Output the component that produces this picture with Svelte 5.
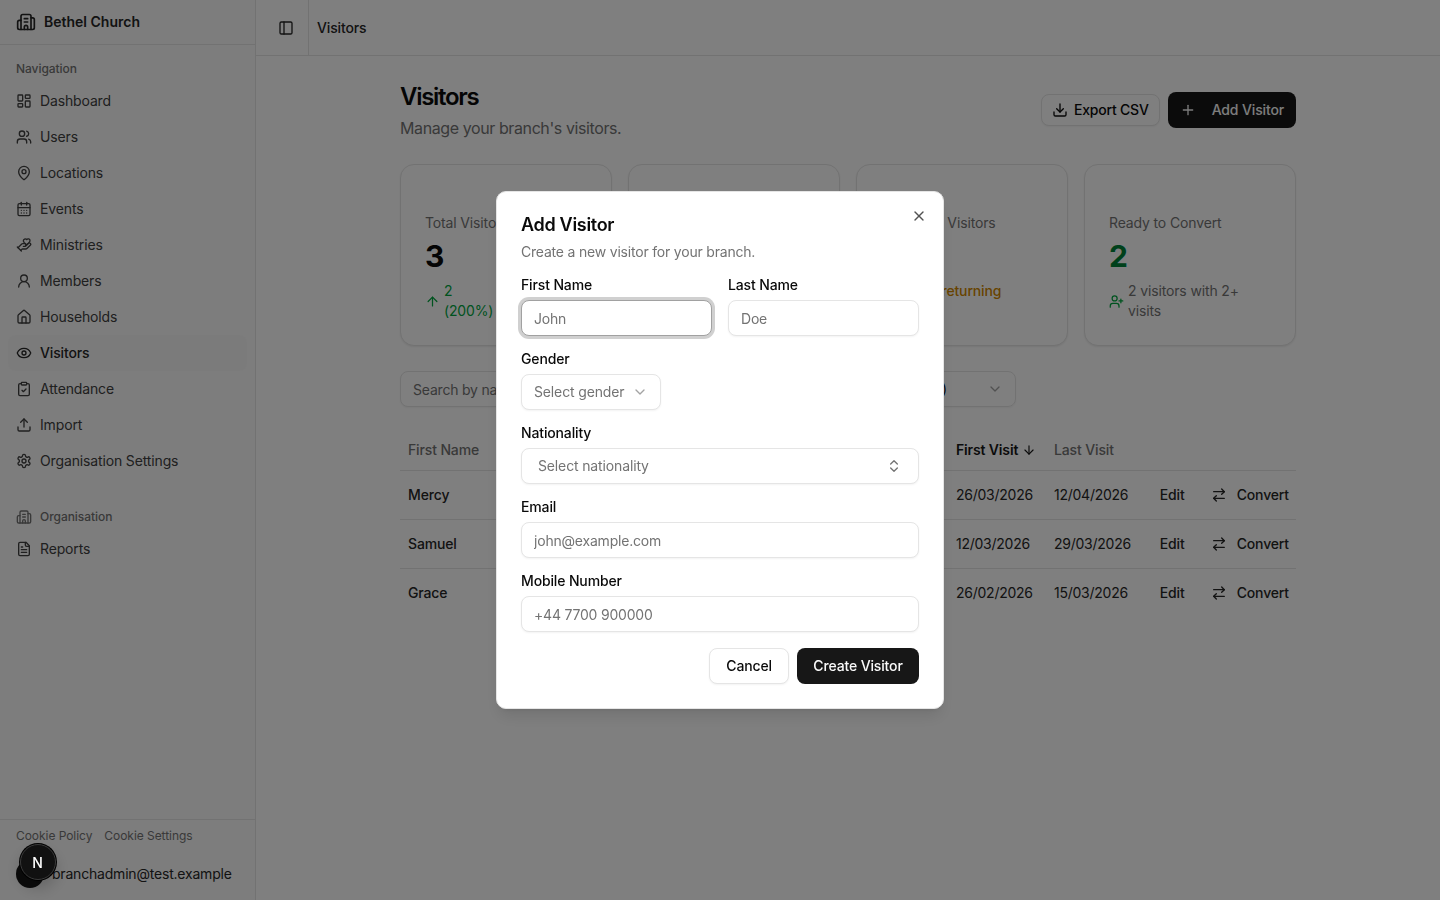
<script lang="ts">
  // lucide icon bodies, keyed by name
  const icons: Record<string, string> = {
    building: '<path d="M10 12h4"/><path d="M10 8h4"/><path d="M14 21v-3a2 2 0 0 0-4 0v3"/><path d="M6 10H4a2 2 0 0 0-2 2v7a2 2 0 0 0 2 2h16a2 2 0 0 0 2-2V9a2 2 0 0 0-2-2h-2"/><path d="M6 21V5a2 2 0 0 1 2-2h8a2 2 0 0 1 2 2v16"/>',
    dashboard: '<rect width="7" height="9" x="3" y="3" rx="1"/><rect width="7" height="5" x="14" y="3" rx="1"/><rect width="7" height="9" x="14" y="12" rx="1"/><rect width="7" height="5" x="3" y="16" rx="1"/>',
    users: '<path d="M16 21v-2a4 4 0 0 0-4-4H6a4 4 0 0 0-4 4v2"/><circle cx="9" cy="7" r="4"/><path d="M22 21v-2a4 4 0 0 0-3-3.87"/><path d="M16 3.13a4 4 0 0 1 0 7.75"/>',
    pin: '<path d="M20 10c0 4.993-5.539 10.193-7.399 11.799a1 1 0 0 1-1.202 0C9.539 20.193 4 14.993 4 10a8 8 0 0 1 16 0"/><circle cx="12" cy="10" r="3"/>',
    calendar: '<path d="M8 2v4"/><path d="M16 2v4"/><rect width="18" height="18" x="3" y="4" rx="2"/><path d="M3 10h18"/><path d="M8 14h.01"/><path d="M12 14h.01"/><path d="M16 14h.01"/><path d="M8 18h.01"/><path d="M12 18h.01"/><path d="M16 18h.01"/>',
    hand: '<path d="M11 14h2a2 2 0 1 0 0-4h-3c-.6 0-1.1.2-1.4.6L3 16"/><path d="m7 20 1.6-1.4c.3-.4.8-.6 1.4-.6h4c1.1 0 2.1-.4 2.8-1.2l4.6-4.4a2 2 0 0 0-2.75-2.91l-4.2 3.9"/><path d="m2 15 6 6"/><path d="M19.5 8.5c.7-.7 1.5-1.6 1.5-2.7A2.73 2.73 0 0 0 16 4a2.78 2.78 0 0 0-5 1.8c0 1.2.8 2 1.5 2.8L16 12Z"/>',
    user: '<circle cx="12" cy="8" r="5"/><path d="M20 21a8 8 0 0 0-16 0"/>',
    home: '<path d="M15 21v-8a1 1 0 0 0-1-1h-4a1 1 0 0 0-1 1v8"/><path d="M3 10a2 2 0 0 1 .709-1.528l7-5.999a2 2 0 0 1 2.582 0l7 5.999A2 2 0 0 1 21 10v9a2 2 0 0 1-2 2H5a2 2 0 0 1-2-2z"/>',
    eye: '<path d="M2.062 12.348a1 1 0 0 1 0-.696 10.75 10.75 0 0 1 19.876 0 1 1 0 0 1 0 .696 10.75 10.75 0 0 1-19.876 0"/><circle cx="12" cy="12" r="3"/>',
    clipboard: '<rect width="8" height="4" x="8" y="2" rx="1"/><path d="M16 4h2a2 2 0 0 1 2 2v14a2 2 0 0 1-2 2H6a2 2 0 0 1-2-2V6a2 2 0 0 1 2-2h2"/><path d="m9 14 2 2 4-4"/>',
    upload: '<path d="M21 15v4a2 2 0 0 1-2 2H5a2 2 0 0 1-2-2v-4"/><path d="m17 8-5-5-5 5"/><path d="M12 3v12"/>',
    settings: '<path d="M12.22 2h-.44a2 2 0 0 0-2 2v.18a2 2 0 0 1-1 1.73l-.43.25a2 2 0 0 1-2 0l-.15-.08a2 2 0 0 0-2.73.73l-.22.38a2 2 0 0 0 .73 2.73l.15.1a2 2 0 0 1 1 1.72v.51a2 2 0 0 1-1 1.74l-.15.09a2 2 0 0 0-.73 2.73l.22.38a2 2 0 0 0 2.73.73l.15-.08a2 2 0 0 1 2 0l.43.25a2 2 0 0 1 1 1.73V20a2 2 0 0 0 2 2h.44a2 2 0 0 0 2-2v-.18a2 2 0 0 1 1-1.73l.43-.25a2 2 0 0 1 2 0l.15.08a2 2 0 0 0 2.73-.73l.22-.39a2 2 0 0 0-.73-2.73l-.15-.08a2 2 0 0 1-1-1.74v-.5a2 2 0 0 1 1-1.74l.15-.09a2 2 0 0 0 .73-2.73l-.22-.38a2 2 0 0 0-2.73-.73l-.15.08a2 2 0 0 1-2 0l-.43-.25a2 2 0 0 1-1-1.73V4a2 2 0 0 0-2-2z"/><circle cx="12" cy="12" r="3"/>',
    file: '<path d="M15 2H6a2 2 0 0 0-2 2v16a2 2 0 0 0 2 2h12a2 2 0 0 0 2-2V7Z"/><path d="M14 2v4a2 2 0 0 0 2 2h4"/><path d="M10 9H8"/><path d="M16 13H8"/><path d="M16 17H8"/>',
    panel: '<rect width="18" height="18" x="3" y="3" rx="2"/><path d="M9 3v18"/>',
    download: '<path d="M21 15v4a2 2 0 0 1-2 2H5a2 2 0 0 1-2-2v-4"/><path d="m7 10 5 5 5-5"/><path d="M12 15V3"/>',
    plus: '<path d="M5 12h14"/><path d="M12 5v14"/>',
    x: '<path d="M18 6 6 18"/><path d="m6 6 12 12"/>',
    chevron: '<path d="m6 9 6 6 6-6"/>',
    updown: '<path d="m7 15 5 5 5-5"/><path d="m7 9 5-5 5 5"/>',
    arrowUp: '<path d="m5 12 7-7 7 7"/><path d="M12 19V5"/>',
    arrowDown: '<path d="M12 5v14"/><path d="m19 12-7 7-7-7"/>',
    userPlus: '<path d="M16 21v-2a4 4 0 0 0-4-4H6a4 4 0 0 0-4 4v2"/><circle cx="9" cy="7" r="4"/><path d="M19 8v6"/><path d="M22 11h-6"/>',
    swap: '<path d="m16 3 4 4-4 4"/><path d="M20 7H4"/><path d="m8 21-4-4 4-4"/><path d="M4 17h16"/>'
  };

  const navItems = [
    { label: 'Dashboard', icon: 'dashboard' },
    { label: 'Users', icon: 'users' },
    { label: 'Locations', icon: 'pin' },
    { label: 'Events', icon: 'calendar' },
    { label: 'Ministries', icon: 'hand' },
    { label: 'Members', icon: 'user' },
    { label: 'Households', icon: 'home' },
    { label: 'Visitors', icon: 'eye', active: true },
    { label: 'Attendance', icon: 'clipboard' },
    { label: 'Import', icon: 'upload' },
    { label: 'Organisation Settings', icon: 'settings' }
  ];

  const visitors = [
    { first: 'Mercy', firstVisit: '26/03/2026', lastVisit: '12/04/2026' },
    { first: 'Samuel', firstVisit: '12/03/2026', lastVisit: '29/03/2026' },
    { first: 'Grace', firstVisit: '26/02/2026', lastVisit: '15/03/2026' }
  ];
</script>

{#snippet icon(name, size = 16)}
  <svg width={size} height={size} viewBox="0 0 24 24" fill="none" stroke="currentColor" stroke-width="2" stroke-linecap="round" stroke-linejoin="round" aria-hidden="true">{@html icons[name]}</svg>
{/snippet}

<div class="shell">
  <aside class="sidebar">
    <div class="brand">
      {@render icon('building', 20)}
      <span>Bethel Church</span>
    </div>

    <nav class="nav">
      <div class="group-label">Navigation</div>
      {#each navItems as item}
        <a class="nav-item" class:active={item.active} href="#top">
          {@render icon(item.icon)}
          <span>{item.label}</span>
        </a>
      {/each}

      <div class="group-label org">
        {@render icon('building')}
        <span>Organisation</span>
      </div>
      <a class="nav-item" href="#top">
        {@render icon('file')}
        <span>Reports</span>
      </a>
    </nav>

    <div class="side-footer">
      <div class="cookie-links">
        <span>Cookie Policy</span>
        <span>Cookie Settings</span>
      </div>
      <div class="account">
        <span class="avatar"></span>
        <span>branchadmin@test.example</span>
      </div>
    </div>
  </aside>

  <div class="main">
    <header class="topbar">
      <button class="trigger" aria-label="Toggle sidebar">{@render icon('panel')}</button>
      <div class="topbar-title">Visitors</div>
    </header>

    <main class="content">
      <div class="page-head">
        <div>
          <h1>Visitors</h1>
          <p>Manage your branch's visitors.</p>
        </div>
        <div class="page-actions">
          <button class="btn outline small">{@render icon('download')} Export CSV</button>
          <button class="btn dark add">{@render icon('plus')} Add Visitor</button>
        </div>
      </div>

      <div class="stats">
        <div class="stat">
          <div class="stat-title">Total Visitors</div>
          <div class="stat-value">3</div>
          <div class="stat-foot green">
            {@render icon('arrowUp', 15)}
            <span>2<br />(200%)</span>
          </div>
        </div>
        <div class="stat"></div>
        <div class="stat">
          <div class="stat-title">Returning Visitors</div>
          <div class="stat-value">2</div>
          <div class="stat-foot amber">
            {@render icon('users', 15)}
            <span>2 of 3 returning</span>
          </div>
        </div>
        <div class="stat">
          <div class="stat-title">Ready to Convert</div>
          <div class="stat-value green">2</div>
          <div class="stat-foot">
            <span class="green foot-icon">{@render icon('userPlus', 15)}</span>
            <span>2 visitors with 2+ visits</span>
          </div>
        </div>
      </div>

      <div class="filters">
        <input class="search" placeholder="Search by name..." />
        <div class="filter-select">
          <span>First Visit (newest)</span>
          {@render icon('chevron')}
        </div>
      </div>

      <table class="table">
        <colgroup>
          <col style="width: 548px" />
          <col style="width: 98px" />
          <col style="width: 105px" />
          <col />
        </colgroup>
        <thead>
          <tr>
            <th>First Name</th>
            <th class="sorted">
              <span class="sort">First Visit {@render icon('arrowDown', 14)}</span>
            </th>
            <th>Last Visit</th>
            <th></th>
          </tr>
        </thead>
        <tbody>
          {#each visitors as v}
            <tr>
              <td class="name">{v.first}</td>
              <td class="date">{v.firstVisit}</td>
              <td class="date">{v.lastVisit}</td>
              <td>
                <div class="row-actions">
                  <span>Edit</span>
                  <span class="convert">{@render icon('swap')} Convert</span>
                </div>
              </td>
            </tr>
          {/each}
        </tbody>
      </table>
    </main>
  </div>
</div>

<div class="overlay"></div>

<div class="modal" role="dialog" aria-labelledby="dialog-title">
  <button class="close" aria-label="Close">{@render icon('x')}</button>
  <h2 id="dialog-title">Add Visitor</h2>
  <p class="modal-desc">Create a new visitor for your branch.</p>

  <div class="form">
    <div class="two">
      <div class="field">
        <label for="first">First Name</label>
        <input id="first" class="input focused" placeholder="John" />
      </div>
      <div class="field">
        <label for="last">Last Name</label>
        <input id="last" class="input" placeholder="Doe" />
      </div>
    </div>

    <div class="field">
      <span class="label">Gender</span>
      <div class="input select gender">
        <span>Select gender</span>
        {@render icon('chevron')}
      </div>
    </div>

    <div class="field">
      <span class="label">Nationality</span>
      <div class="input select nationality">
        <span>Select nationality</span>
        {@render icon('updown')}
      </div>
    </div>

    <div class="field">
      <label for="email">Email</label>
      <input id="email" class="input" placeholder="john@example.com" />
    </div>

    <div class="field">
      <label for="mobile">Mobile Number</label>
      <input id="mobile" class="input" placeholder="+44 7700 900000" />
    </div>

    <div class="modal-actions">
      <button class="btn outline">Cancel</button>
      <button class="btn dark create">Create Visitor</button>
    </div>
  </div>
</div>

<button class="dev-badge" aria-label="Next dev tools">N</button>

<style>
  :global(body) {
    margin: 0;
    font-family: Inter, "Liberation Sans", sans-serif;
    font-size: 14px;
    line-height: 20px;
    letter-spacing: -0.14px;
    color: #0a0a0a;
    background: #fff;
  }

  * {
    box-sizing: border-box;
  }

  svg {
    display: block;
    flex: none;
  }

  button {
    font-family: inherit;
    letter-spacing: inherit;
    cursor: pointer;
  }

  .shell {
    display: flex;
    height: 100vh;
    overflow: hidden;
  }

  /* Sidebar */
  .sidebar {
    width: 256px;
    flex: none;
    display: flex;
    flex-direction: column;
    background: #fafafa;
    border-right: 1px solid #e5e5e5;
  }

  .brand {
    height: 45px;
    flex: none;
    display: flex;
    align-items: center;
    gap: 8px;
    padding: 0 16px 1px;
    font-weight: 600;
    letter-spacing: 0;
    color: #262626;
    border-bottom: 1px solid #e5e5e5;
  }

  .nav {
    flex: 1;
    padding: 10px 8px 0;
  }

  .group-label {
    height: 28px;
    padding: 0 8px;
    display: flex;
    align-items: center;
    gap: 8px;
    font-size: 12px;
    font-weight: 500;
    letter-spacing: -0.05px;
    color: #737373;
  }

  .group-label.org {
    margin-top: 24px;
  }

  .nav-item {
    height: 36px;
    display: flex;
    align-items: center;
    gap: 8px;
    padding: 0 8px;
    border-radius: 8px;
    color: #404040;
    text-decoration: none;
  }

  .nav-item.active {
    background: #f7f7f7;
    color: #262626;
    font-weight: 500;
  }

  .side-footer {
    flex: none;
    border-top: 1px solid #e5e5e5;
    padding: 8px 16px;
  }

  .cookie-links {
    display: flex;
    gap: 12px;
    font-size: 12px;
    line-height: 16px;
    letter-spacing: -0.05px;
    color: #737373;
    margin-bottom: 12px;
  }

  .account {
    height: 36px;
    display: flex;
    align-items: center;
    gap: 8px;
    letter-spacing: -0.2px;
    color: #262626;
  }

  .avatar {
    width: 28px;
    height: 28px;
    border-radius: 50%;
    background: #171717;
    flex: none;
  }

  /* Main */
  .main {
    flex: 1;
    min-width: 0;
  }

  .topbar {
    height: 56px;
    display: flex;
    align-items: stretch;
    padding-left: 16px;
    border-bottom: 1px solid #e5e5e5;
  }

  .trigger {
    width: 28px;
    height: 28px;
    align-self: center;
    display: flex;
    align-items: center;
    justify-content: center;
    padding: 0;
    border: 0;
    background: none;
    color: #262626;
    margin-right: 8px;
  }

  .topbar-title {
    display: flex;
    align-items: center;
    padding-left: 8px;
    border-left: 1px solid #e5e5e5;
    font-weight: 500;
    color: #262626;
  }

  .content {
    width: 896px;
    margin: 0 auto;
    padding-top: 24px;
  }

  .page-head {
    display: flex;
    align-items: center;
    justify-content: space-between;
  }

  h1 {
    margin: 1px 0 -1px;
    font-size: 24px;
    line-height: 32px;
    font-weight: 600;
    letter-spacing: -1.3px;
  }

  .page-head p {
    margin: 4px 0 0;
    font-size: 16px;
    line-height: 24px;
    letter-spacing: -0.4px;
    color: #737373;
  }

  .page-actions {
    display: flex;
    align-items: center;
    gap: 8px;
  }

  .btn {
    display: inline-flex;
    align-items: center;
    justify-content: center;
    height: 36px;
    border-radius: 8px;
    font-size: 14px;
    line-height: 20px;
    font-weight: 500;
    white-space: nowrap;
  }

  .btn.outline {
    background: #fff;
    color: #0a0a0a;
    border: 1px solid #e5e5e5;
    box-shadow: 0 1px 2px rgba(0, 0, 0, 0.05);
    padding: 0 16px;
  }

  .btn.outline.small {
    height: 32px;
    gap: 6px;
    padding: 0 10px;
    letter-spacing: -0.2px;
  }

  .btn.dark {
    background: #171717;
    color: #fafafa;
    border: 0;
  }

  .btn.add {
    gap: 16px;
    padding: 0 12px;
  }

  .stats {
    display: grid;
    grid-template-columns: repeat(4, 1fr);
    gap: 16px;
    margin-top: 24px;
  }

  .stat {
    height: 182px;
    padding: 48px 24px 24px;
    background: #fff;
    border: 1px solid #e5e5e5;
    border-radius: 14px;
    box-shadow: 0 1px 2px rgba(0, 0, 0, 0.08);
  }

  .stat-title {
    color: #737373;
  }

  .stat-value {
    margin-top: 5px;
    font-size: 30px;
    line-height: 36px;
    font-weight: 700;
  }

  .stat-foot {
    margin-top: 7px;
    display: flex;
    align-items: center;
    gap: 4px;
    color: #737373;
  }

  .foot-icon {
    flex: none;
  }

  .green {
    color: #00a63e;
  }

  .stat-value.green {
    color: #008236;
  }

  .amber {
    color: #d08700;
    font-weight: 500;
  }

  .filters {
    width: 616px;
    display: flex;
    gap: 12px;
    margin-top: 25px;
  }

  .search {
    flex: 1;
    min-width: 0;
    height: 36px;
    padding: 0 12px;
    font: inherit;
    letter-spacing: -0.2px;
    border: 1px solid #e5e5e5;
    border-radius: 8px;
    box-shadow: 0 1px 2px rgba(0, 0, 0, 0.05);
    outline: none;
  }

  .search::placeholder,
  .input::placeholder {
    color: #737373;
  }

  .filter-select {
    height: 36px;
    display: flex;
    align-items: center;
    gap: 40px;
    padding: 0 12px;
    border: 1px solid #e5e5e5;
    border-radius: 8px;
    box-shadow: 0 1px 2px rgba(0, 0, 0, 0.05);
  }

  .filter-select svg {
    color: #a3a3a3;
  }

  .table {
    width: 100%;
    margin-top: 23px;
    border-collapse: collapse;
    table-layout: fixed;
  }

  .table th {
    height: 40px;
    padding: 0 8px;
    text-align: left;
    font-weight: 500;
    color: #737373;
    border-bottom: 1px solid #e5e5e5;
  }

  .table th.sorted {
    color: #171717;
    font-weight: 600;
  }

  .sort {
    display: inline-flex;
    align-items: center;
    gap: 4px;
  }

  .table td {
    height: 49px;
    padding: 0 8px;
    border-bottom: 1px solid #e5e5e5;
    color: #262626;
    white-space: nowrap;
  }

  .table tr:last-child td {
    border-bottom: 0;
  }

  .table td.name {
    font-weight: 500;
  }

  .table td.date {
    letter-spacing: -0.25px;
  }

  .row-actions {
    display: flex;
    align-items: center;
    justify-content: flex-end;
    gap: 26px;
    margin-right: -1px;
    font-weight: 500;
  }

  .convert {
    display: inline-flex;
    align-items: center;
    gap: 10px;
  }

  /* Dialog */
  .overlay {
    position: fixed;
    inset: 0;
    background: rgba(0, 0, 0, 0.5);
  }

  .modal {
    position: fixed;
    top: 191px;
    left: 496px;
    width: 448px;
    padding: 24px;
    background: #fff;
    border: 1px solid #e5e5e5;
    border-radius: 10px;
    box-shadow: 0 10px 15px -3px rgba(0, 0, 0, 0.1), 0 4px 6px -4px rgba(0, 0, 0, 0.1);
  }

  .close {
    position: absolute;
    top: 16px;
    right: 16px;
    padding: 0;
    border: 0;
    background: none;
    color: #525252;
  }

  h2 {
    margin: 0;
    font-size: 18px;
    line-height: 18px;
    font-weight: 600;
    letter-spacing: -0.3px;
    color: #0a0a0a;
  }

  .modal-desc {
    margin: 8px 0 0;
    letter-spacing: -0.2px;
    color: #737373;
  }

  .form {
    margin-top: 16px;
    display: flex;
    flex-direction: column;
    gap: 16px;
  }

  .two {
    display: grid;
    grid-template-columns: 1fr 1fr;
    gap: 16px;
  }

  .field {
    display: flex;
    flex-direction: column;
    gap: 8px;
  }

  .field label,
  .label {
    font-size: 14px;
    line-height: 14px;
    font-weight: 500;
    color: #0a0a0a;
  }

  .input {
    width: 100%;
    height: 36px;
    padding: 0 12px;
    font: inherit;
    letter-spacing: -0.2px;
    color: #0a0a0a;
    background: #fff;
    border: 1px solid #e5e5e5;
    border-radius: 8px;
    box-shadow: 0 1px 2px rgba(0, 0, 0, 0.05);
    outline: none;
  }

  .input.focused {
    border-color: #a1a1a1;
    box-shadow: 0 0 0 3px rgba(161, 161, 161, 0.5);
  }

  .select {
    display: flex;
    align-items: center;
    justify-content: space-between;
    letter-spacing: -0.14px;
    color: #737373;
  }

  .select svg {
    color: #a3a3a3;
  }

  .gender {
    width: 140px;
  }

  .nationality {
    padding: 0 16px;
  }

  .nationality svg {
    color: #737373;
  }

  .modal-actions {
    display: flex;
    justify-content: flex-end;
    gap: 8px;
  }

  .btn.create {
    width: 122px;
  }

  /* Next.js dev indicator */
  .dev-badge {
    position: fixed;
    left: 19.5px;
    top: 844px;
    width: 36px;
    height: 36px;
    padding: 0;
    border-radius: 50%;
    border: 1px solid #3a3a3a;
    background: #111;
    color: #fff;
    font-size: 14px;
    font-weight: 500;
    box-shadow: 0 0 0 1px #000, 0 8px 16px rgba(0, 0, 0, 0.2);
  }
</style>
